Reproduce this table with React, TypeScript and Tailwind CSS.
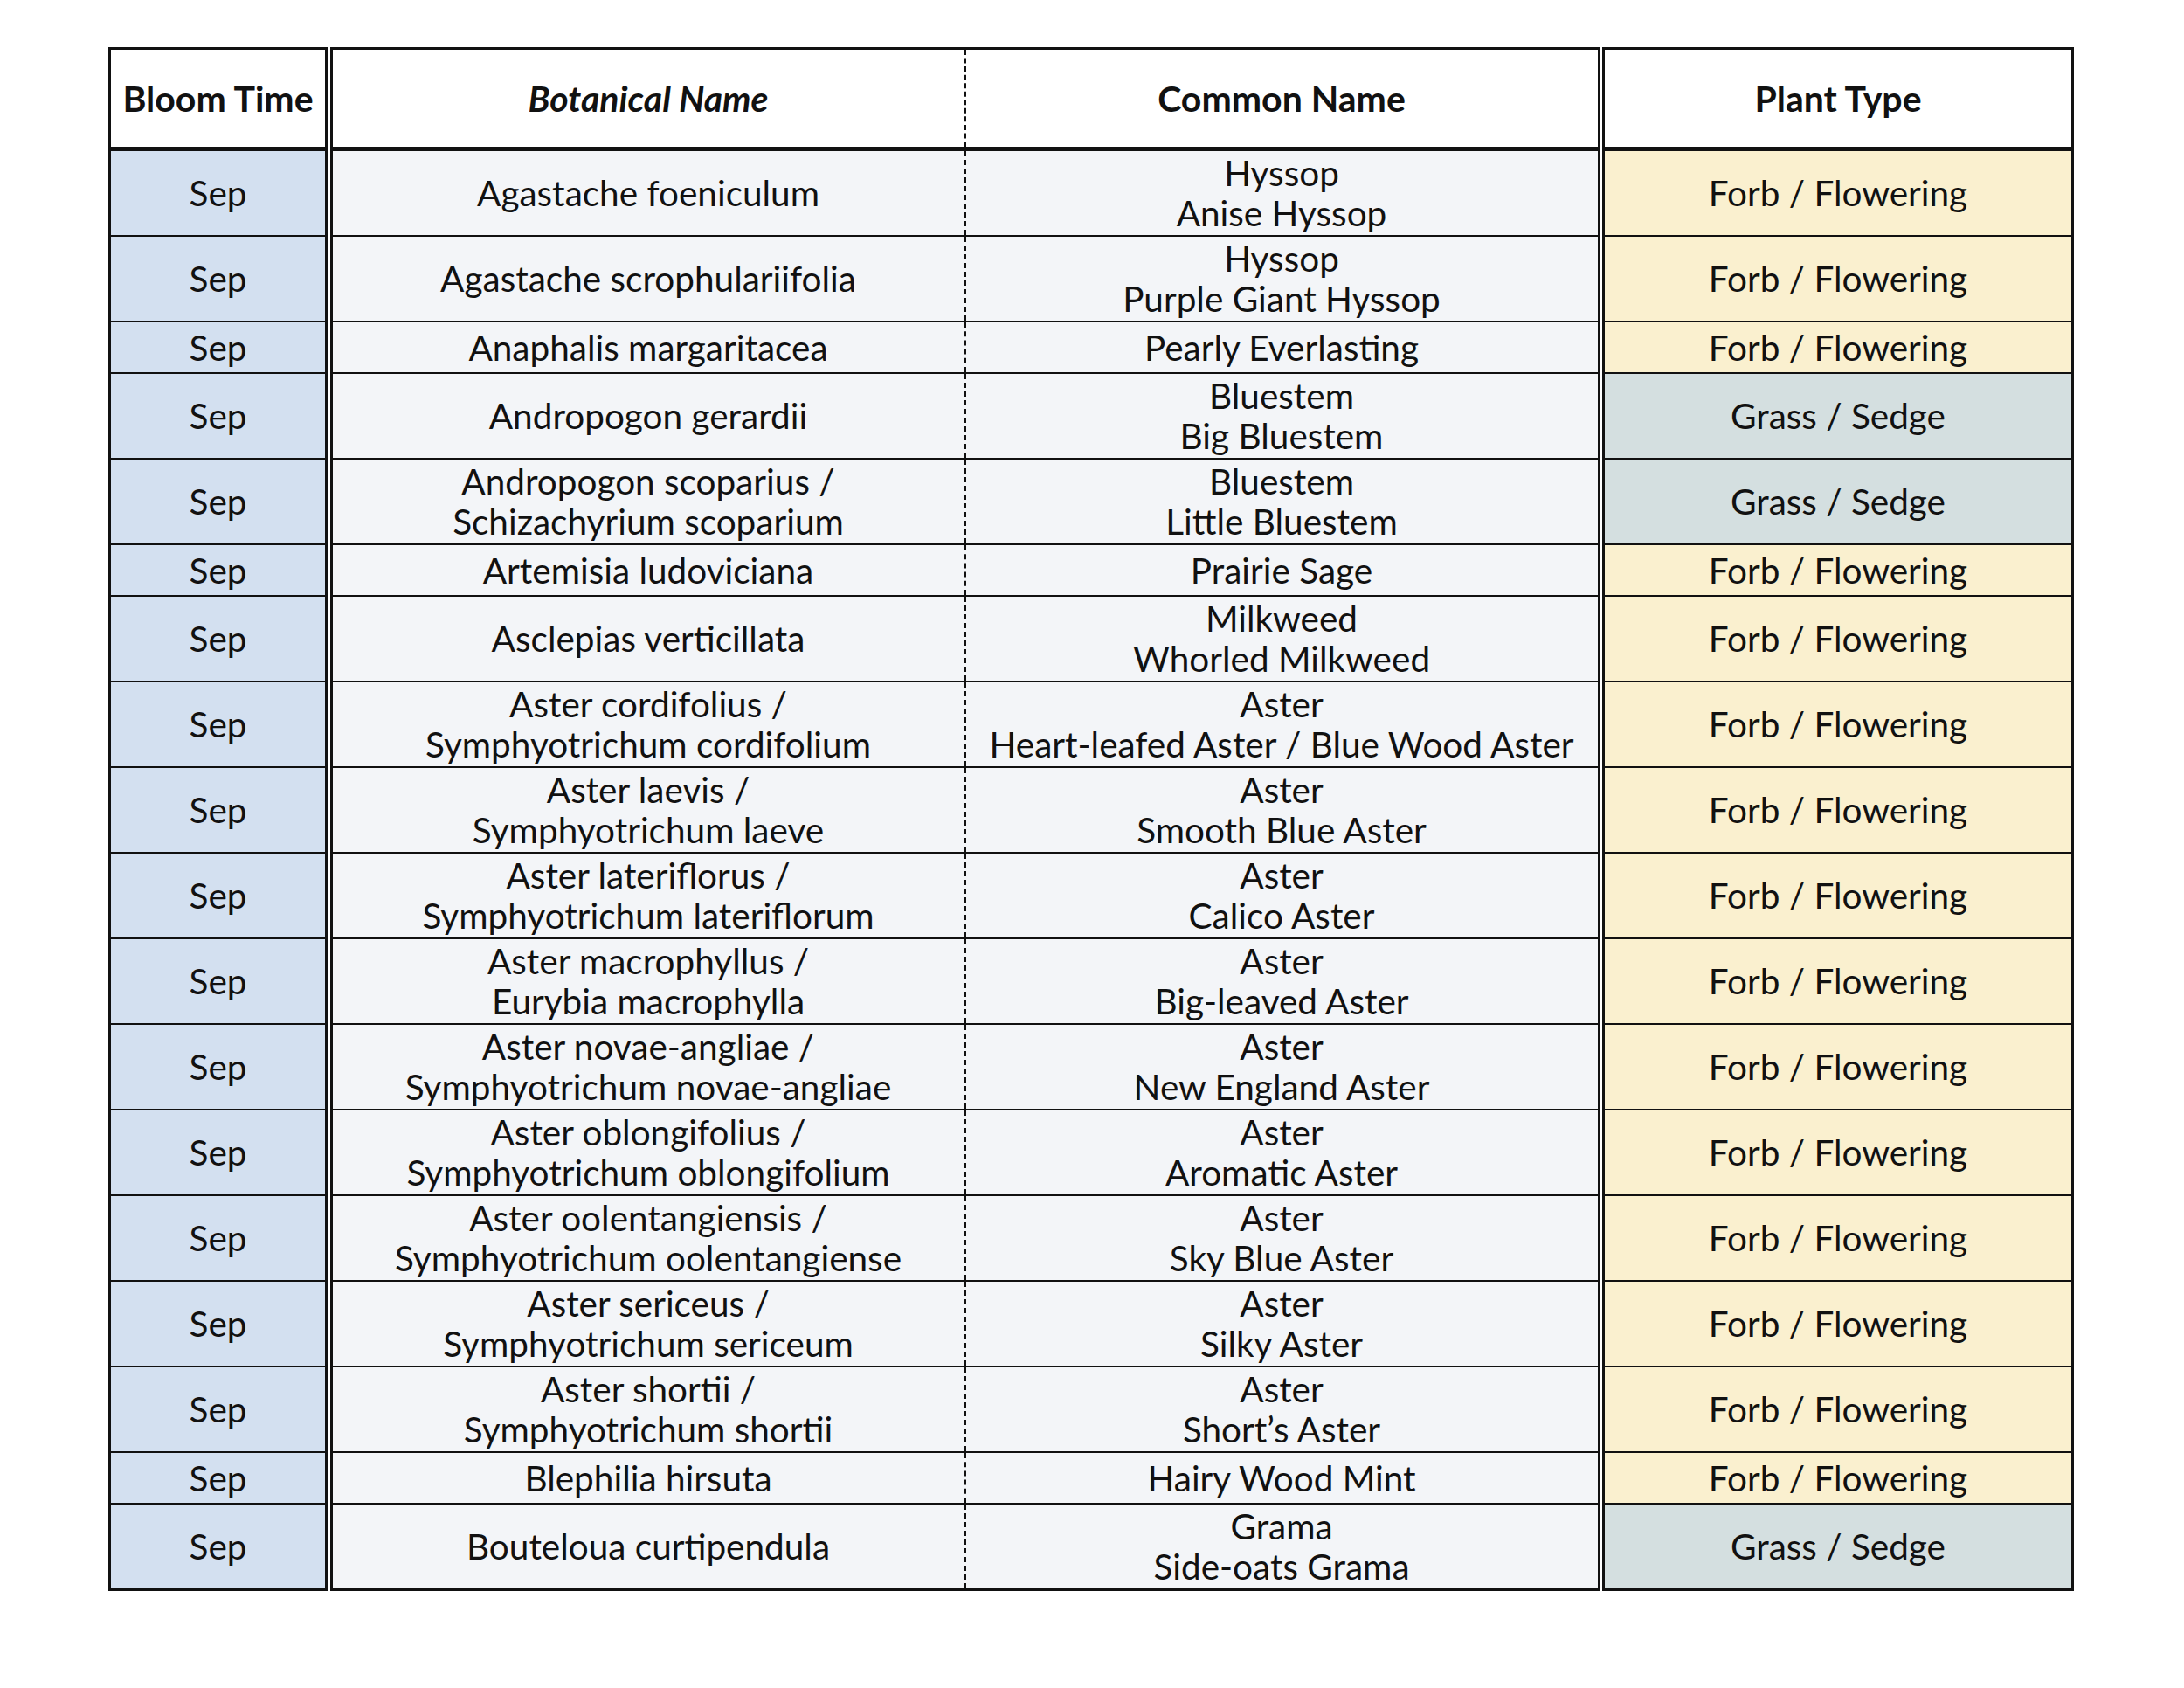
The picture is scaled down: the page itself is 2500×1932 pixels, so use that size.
import React from "react";

type Row = {
  botanical: string[];
  common: string[];
  type: "forb" | "grass";
};

const rows: Row[] = [
  { botanical: ["Agastache foeniculum"], common: ["Hyssop", "Anise Hyssop"], type: "forb" },
  { botanical: ["Agastache scrophulariifolia"], common: ["Hyssop", "Purple Giant Hyssop"], type: "forb" },
  { botanical: ["Anaphalis margaritacea"], common: ["Pearly Everlasting"], type: "forb" },
  { botanical: ["Andropogon gerardii"], common: ["Bluestem", "Big Bluestem"], type: "grass" },
  { botanical: ["Andropogon scoparius /", "Schizachyrium scoparium"], common: ["Bluestem", "Little Bluestem"], type: "grass" },
  { botanical: ["Artemisia ludoviciana"], common: ["Prairie Sage"], type: "forb" },
  { botanical: ["Asclepias verticillata"], common: ["Milkweed", "Whorled Milkweed"], type: "forb" },
  { botanical: ["Aster cordifolius /", "Symphyotrichum cordifolium"], common: ["Aster", "Heart-leafed Aster / Blue Wood Aster"], type: "forb" },
  { botanical: ["Aster laevis /", "Symphyotrichum laeve"], common: ["Aster", "Smooth Blue Aster"], type: "forb" },
  { botanical: ["Aster lateriflorus /", "Symphyotrichum lateriflorum"], common: ["Aster", "Calico Aster"], type: "forb" },
  { botanical: ["Aster macrophyllus /", "Eurybia macrophylla"], common: ["Aster", "Big-leaved Aster"], type: "forb" },
  { botanical: ["Aster novae-angliae /", "Symphyotrichum novae-angliae"], common: ["Aster", "New England Aster"], type: "forb" },
  { botanical: ["Aster oblongifolius /", "Symphyotrichum oblongifolium"], common: ["Aster", "Aromatic Aster"], type: "forb" },
  { botanical: ["Aster oolentangiensis /", "Symphyotrichum oolentangiense"], common: ["Aster", "Sky Blue Aster"], type: "forb" },
  { botanical: ["Aster sericeus /", "Symphyotrichum sericeum"], common: ["Aster", "Silky Aster"], type: "forb" },
  { botanical: ["Aster shortii /", "Symphyotrichum shortii"], common: ["Aster", "Short’s Aster"], type: "forb" },
  { botanical: ["Blephilia hirsuta"], common: ["Hairy Wood Mint"], type: "forb" },
  { botanical: ["Bouteloua curtipendula"], common: ["Grama", "Side-oats Grama"], type: "grass" },
];

const Lines = ({ lines }: { lines: string[] }) => (
  <div className="flex flex-col items-center">
    {lines.map((l) => (
      <span key={l} className="whitespace-nowrap">{l}</span>
    ))}
  </div>
);

export default function App() {
  return (
    <div className="w-[2500px] h-[1932px] bg-white pl-[124px] pt-[54px] text-[#111] font-['Lato',sans-serif] text-[40.5px] leading-[46px]">
      <div className="grid grid-cols-[251px_1454px_540px] gap-x-[2.5px]">
        {/* header */}
        <div className="h-[119px] flex items-center justify-center bg-white border-x-[3px] border-t-[3px] border-b-[5px] border-[#111] font-bold text-[41px]">
          Bloom Time
        </div>
        <div className="h-[119px] flex bg-white border-x-[3px] border-t-[3px] border-b-[5px] border-[#111] font-bold text-[41px]">
          <div className="flex-1 flex items-center justify-center border-r-2 border-dashed border-[#111] italic">
            Botanical Name
          </div>
          <div className="flex-1 flex items-center justify-center">Common Name</div>
        </div>
        <div className="h-[119px] flex items-center justify-center bg-white border-x-[3px] border-t-[3px] border-b-[5px] border-[#111] font-bold text-[41px]">
          Plant Type
        </div>

        {rows.map((r, i) => {
          const last = i === rows.length - 1;
          const bottom = last ? "border-b-[3px]" : "border-b-2";
          return (
            <React.Fragment key={i}>
              <div className={`min-h-[59px] flex items-center justify-center bg-[#d3e0f0] border-x-[3px] border-[#111] ${bottom}`}>
                Sep
              </div>
              <div className={`min-h-[59px] flex bg-[#f3f5f8] border-x-[3px] border-[#111] ${bottom}`}>
                <div className="flex-1 flex items-center justify-center py-[2px] border-r-2 border-dashed border-[#111]">
                  <Lines lines={r.botanical} />
                </div>
                <div className="flex-1 flex items-center justify-center py-[2px]">
                  <Lines lines={r.common} />
                </div>
              </div>
              <div
                className={`min-h-[59px] flex items-center justify-center border-x-[3px] border-[#111] ${bottom} ${
                  r.type === "forb" ? "bg-[#faf0cf]" : "bg-[#d4dfe0]"
                }`}
              >
                {r.type === "forb" ? "Forb / Flowering" : "Grass / Sedge"}
              </div>
            </React.Fragment>
          );
        })}
      </div>
    </div>
  );
}
